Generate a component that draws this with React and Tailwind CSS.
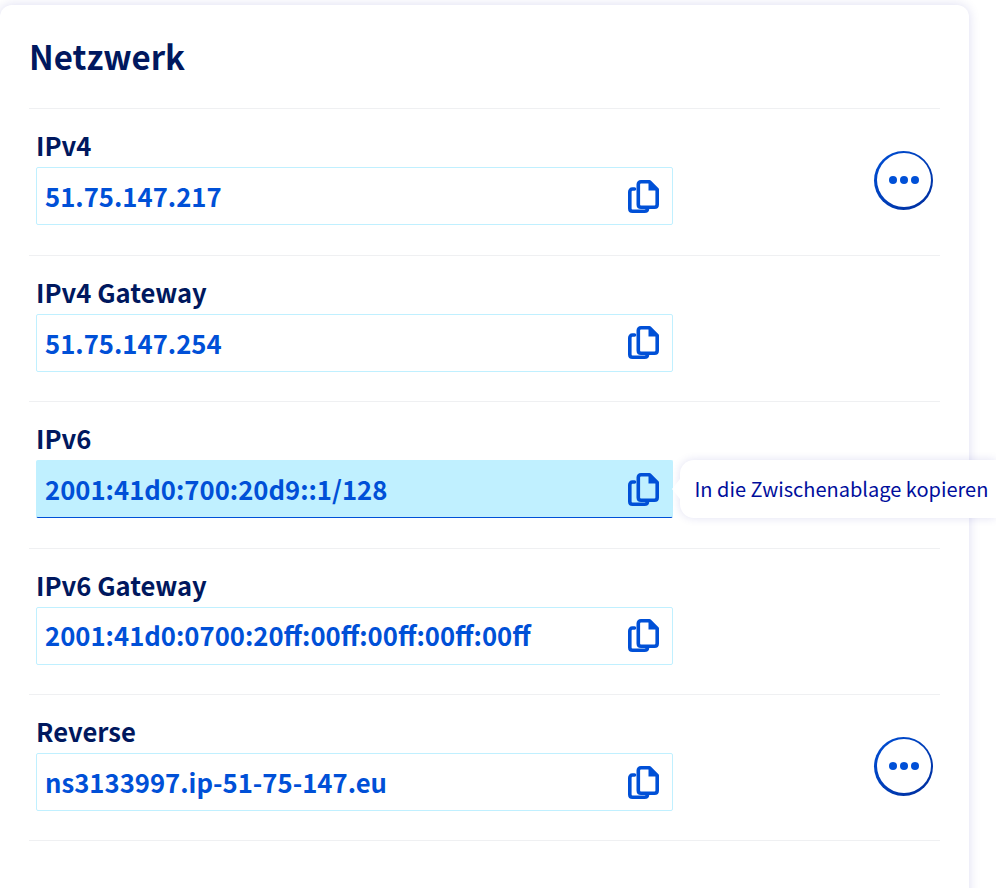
import React from 'react';

const rows = [
  { label: 'IPv4', value: '51.75.147.217', menu: true },
  { label: 'IPv4 Gateway', value: '51.75.147.254' },
  { label: 'IPv6', value: '2001:41d0:700:20d9::1/128', active: true },
  { label: 'IPv6 Gateway', value: '2001:41d0:0700:20ff:00ff:00ff:00ff:00ff' },
  { label: 'Reverse', value: 'ns3133997.ip-51-75-147.eu', menu: true },
];

const CopyIcon = () => (
  <svg width="31" height="33" viewBox="0 0 31 33" fill="none" className="shrink-0">
    <path
      d="M6.5 9H4.5C2.8 9 1.8 10.3 1.8 12V28.5C1.8 30.2 2.8 31.2 4.5 31.2H16.5C18.2 31.2 19.5 30.2 19.5 28.5"
      stroke="#0050d7"
      strokeWidth="3.6"
      strokeLinecap="round"
    />
    <path
      d="M13 1.8H21.5L29.2 9.5V24.5C29.2 26.2 28.2 27.2 26.5 27.2H13C11.3 27.2 10.3 26.2 10.3 24.5V4.5C10.3 2.8 11.3 1.8 13 1.8Z"
      stroke="#0050d7"
      strokeWidth="3.6"
      strokeLinejoin="round"
    />
    <path d="M20.5 2V10.5H29Z" fill="#0050d7" />
  </svg>
);

const MenuButton = () => (
  <button className="w-[59px] h-[59px] rounded-full bg-gradient-to-br from-[#0050d7] to-[#002d9c] p-[2.5px]">
    <span className="w-full h-full rounded-full bg-white flex items-center justify-center gap-[3px]">
      <span className="w-[8px] h-[8px] rounded-full bg-[#0050d7]" />
      <span className="w-[8px] h-[8px] rounded-full bg-[#0050d7]" />
      <span className="w-[8px] h-[8px] rounded-full bg-[#0050d7]" />
    </span>
  </button>
);

const Row = ({ row }) => (
  <div className="h-[146.45px] border-t border-[#eff0f2] flex items-center">
    <div className="ml-[7px] w-[637px] pt-[4px]">
      <div className="text-[25.6px] leading-[32px] font-semibold text-[#00185e] h-[32px] -mt-[9px] mb-[2px] -translate-y-[4px]">
        {row.label}
      </div>
      <div className="relative">
        <div
          className={`h-[58px] pl-[8px] pr-[13px] rounded-[2px] border flex items-center justify-between text-[#0050d7] text-[25.7px] font-semibold ${
            row.active
              ? 'bg-[#c0f0ff] border-[#c0f0ff] border-b-[#0050d7]'
              : 'bg-white border-[#c0f0ff]'
          }`}
        >
          <span>{row.value}</span>
          <CopyIcon />
        </div>
        {row.active && (
          <div className="absolute left-[644px] top-0 h-[58px] w-[316px] bg-white rounded-l-[14px] shadow-[0_0_10px_rgba(0,14,156,0.12)] flex items-center pl-[14.5px] text-[20px] text-[#000e9c] whitespace-nowrap">
            <span className="absolute -left-[8px] top-1/2 -translate-y-1/2 w-0 h-0 border-y-[10px] border-y-transparent border-r-[8px] border-r-white" />
            In die Zwischenablage kopieren
          </div>
        )}
      </div>
    </div>
    {row.menu && (
      <div className="ml-[201px] -mt-[3px]">
        <MenuButton />
      </div>
    )}
  </div>
);

export default function App() {
  return (
    <div
      className="w-[996px] h-[888px] overflow-hidden bg-white pt-[5px]"
      style={{ fontFamily: '"Noto Sans CJK SC", "Noto Sans", sans-serif' }}
    >
      <div className="w-[969px] h-[960px] bg-white rounded-[12px] shadow-[0_0_12px_rgba(0,14,156,0.14)] pl-[29px] pr-[29px]">
        <h1 className="h-[103.2px] pt-[28px] text-[33px] leading-[46px] font-bold text-[#00185e]">Netzwerk</h1>
        {rows.map((row) => (
          <Row key={row.label} row={row} />
        ))}
        <div className="border-t border-[#eff0f2]" />
      </div>
    </div>
  );
}
